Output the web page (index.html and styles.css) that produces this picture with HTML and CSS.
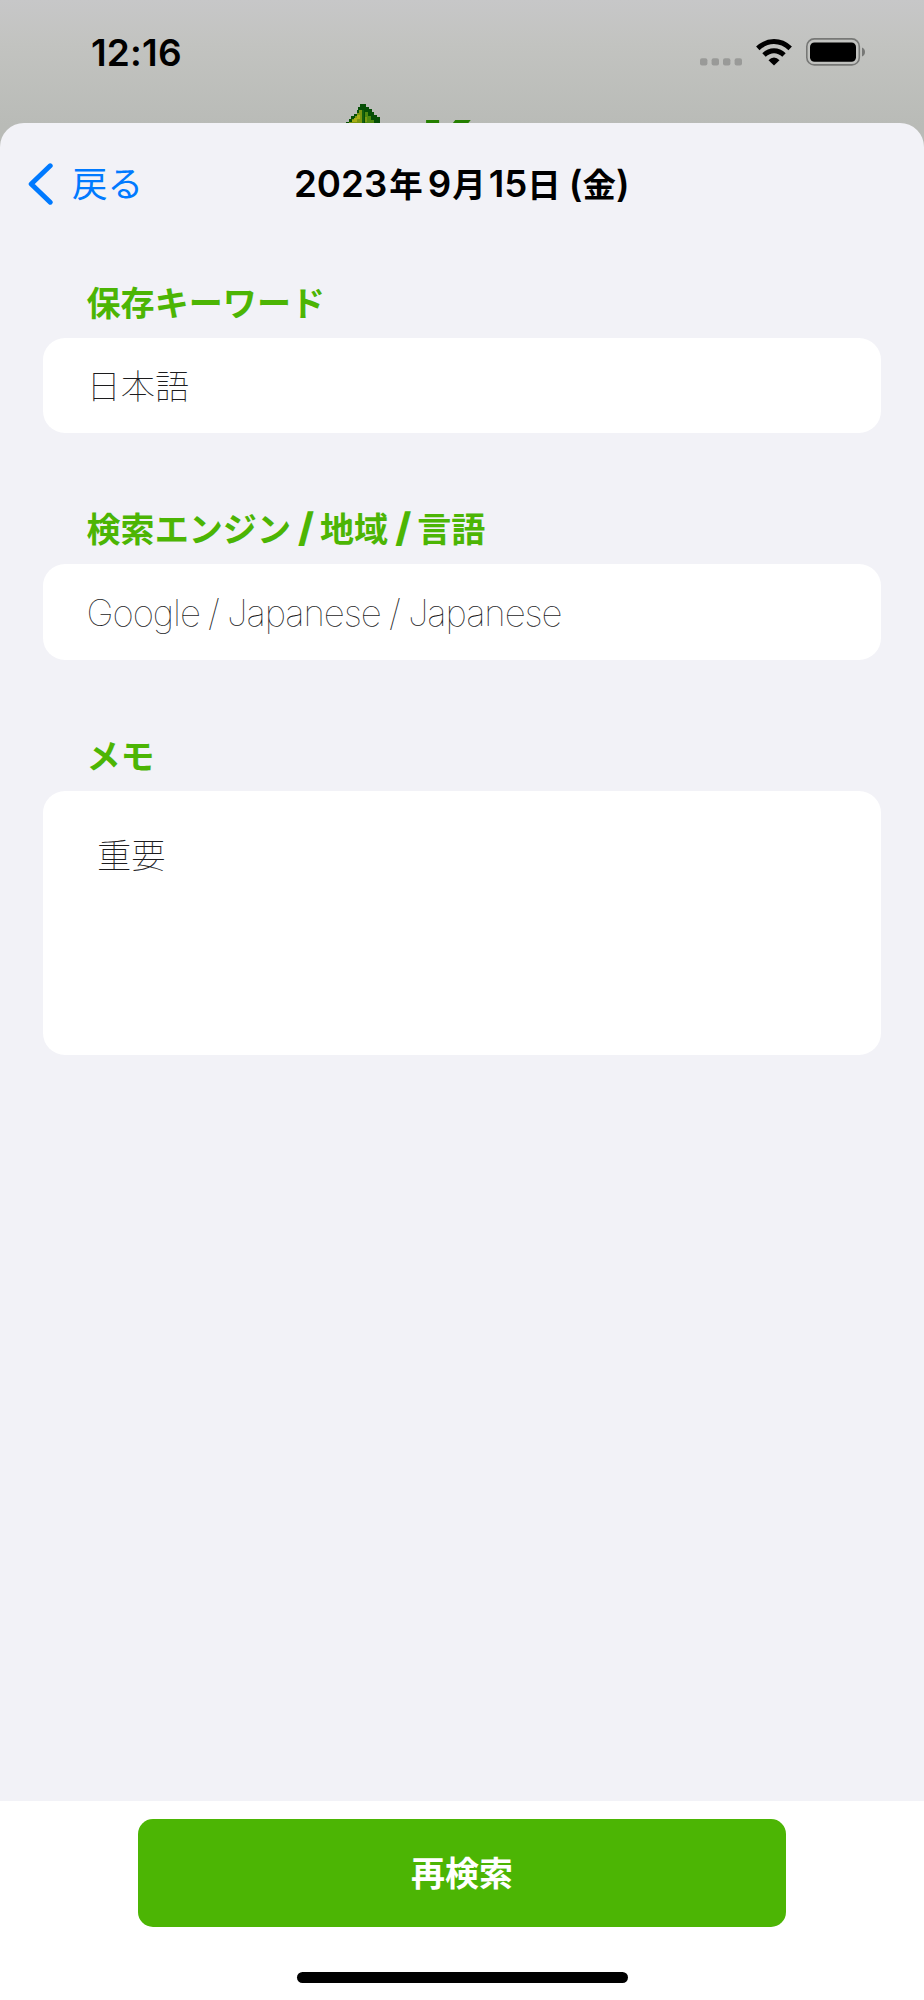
FILE: index.html
```html
<!DOCTYPE html>
<html lang="ja">
<head>
<meta charset="utf-8">
<title>2023年9月15日(金)</title>
<link rel="stylesheet" href="styles.css">
</head>
<body>
<div class="screen">
  <header class="backdrop">
    <div class="status">
      <span class="time">12:16</span>
      <div class="indicators">
        <svg class="dots" width="42" height="8" viewBox="0 0 42 8"><g fill="#999a98"><rect x="0" y="0.2" width="7.4" height="7.4" rx="2"/><rect x="11.6" y="0.2" width="7.4" height="7.4" rx="2"/><rect x="23" y="0.2" width="7.4" height="7.4" rx="2"/><rect x="34.6" y="0.2" width="7.4" height="7.4" rx="2"/></g></svg>
        <svg class="wifi" width="36" height="27" viewBox="0 0 36 27"><g fill="none" stroke="#000" stroke-width="5"><path d="M1.8 9.4Q9 2.6 18 2.6T34.2 9.4"/><path d="M8 16Q12.5 11.8 18 11.8T28 16"/></g><path d="M18 26.5l-5.5-5.3Q15 18.6 18 18.6t5.5 2.6z"/></svg>
        <svg class="battery" width="60" height="28" viewBox="0 0 60 28"><rect x="0.8" y="0.9" width="52.5" height="26" rx="7.5" fill="none" stroke="#777876" stroke-width="1.6"/><rect x="4" y="4.5" width="46" height="19.2" rx="4.5"/><path d="M56 9.6q3 1.3 3 4.4t-3 4.4z" fill="#777876"/></svg>
      </div>
    </div>
    <div class="brand">
      <svg class="leaf" width="34" height="20" viewBox="0 0 34 20" shape-rendering="crispEdges"><path fill="#064f06" d="M14 0h6v2.7h3v2.6h2.5V8h2.7v2.7H31v2.7h2.5V20H0v-2.5h2.5v-2.6h2.7v-2.7H8V9.6h2.6V6h1V3H14z"/><path fill="#7b9710" d="M13 6h2.5v14H3v-2h3v-3h3v-3h2v-3h2z"/><path fill="#a9ad16" d="M8 14h3v-3h3v4h-3v3H6v-2h2z"/><path fill="#16610f" d="M16 6h2v14h-2z"/><path fill="#4e8a10" d="M19 8h3v4h3v4h3v4h-9z"/><path fill="#7b9a12" d="M19 13h2v5h-2z"/></svg>
      <span class="name">K</span>
    </div>
  </header>
  <main class="sheet">
    <nav class="nav">
      <a class="back"><svg width="26" height="42" viewBox="0 0 26 42"><path d="M22.2 2.8L3.2 21l19 18.2" fill="none" stroke="#007aff" stroke-width="5" stroke-linecap="round" stroke-linejoin="round"/></svg><span>戻る</span></a>
      <h1 class="title">2023<span class="k year">年</span>9<span class="k month">月</span>15<span class="k day">日</span>(<span class="k">金</span>)</h1>
    </nav>
    <section class="field">
      <h2>保存キーワード</h2>
      <div class="card jp">日本語</div>
    </section>
    <section class="field">
      <h2>検索エンジン<span class="slash">/</span>地域<span class="slash">/</span>言語</h2>
      <div class="card latin">Google / Japanese / Japanese</div>
    </section>
    <section class="field">
      <h2>メモ</h2>
      <div class="card memo jp">重要</div>
    </section>
  </main>
  <footer class="footer">
    <button class="search">再検索</button>
    <div class="home"></div>
  </footer>
</div>
</body>
</html>
```

FILE: styles.css
```css
* { box-sizing: border-box; }
body { margin: 0; font-family: Inter, "Noto Sans CJK JP", sans-serif; color: #000; }
.screen { width: 924px; height: 2000px; display: flex; flex-direction: column; overflow: hidden; background: #fff; }
.backdrop { height: 160px; flex: none; background: linear-gradient(#c7c7c8 0, #c2c3c0 45px, #b9bbb7 125px); overflow: hidden; }
.status { height: 104px; display: flex; justify-content: space-between; padding: 0 58px 0 91px; }
.time { font-size: 37px; font-weight: 600; line-height: 44px; margin-top: 31px; letter-spacing: 0.2px; }
.indicators { display: flex; align-items: flex-start; }
.dots { margin-top: 58px; }
.wifi { margin: 39px 14px 0; }
.battery { margin-top: 38px; }
.brand { display: flex; height: 56px; padding-left: 346px; }
.leaf { flex: none; }
.name { margin-left: 43px; font-size: 66px; line-height: 80px; font-weight: 900; color: #257f00; }
.sheet { flex: 1; margin-top: -37px; background: #f2f2f7; border-radius: 24px 24px 0 0; padding: 0 43px; }
.nav { position: relative; height: 148.5px; margin: 0 -43px; padding: 38px 0 0 28px; }
.back { display: flex; align-items: center; gap: 18px; height: 46px; width: 130px; color: #007aff; font: 400 35.5px/42px "Noto Sans CJK JP", sans-serif; white-space: nowrap; }
.back span { padding-bottom: 5px; }
.title { position: absolute; left: 294px; top: 38px; margin: 0; font-size: 36.7px; line-height: 46px; font-weight: 600; white-space: nowrap; }
.k { font-family: "Noto Sans CJK JP", sans-serif; font-size: 33.5px; line-height: 1; }
.year { margin: 0 5px 0 2px; }
.month { margin: 0 3px 0 1px; }
.day { margin-right: 8px; }
.field { margin-bottom: 65px; }
h2 { margin: 0; height: 66px; padding: 6px 0 0 43.5px; font: 700 34.1px/46px "Noto Sans CJK JP", sans-serif; color: #4cb504; }
.slash { font-family: Inter, sans-serif; font-size: 40px; line-height: 1; font-weight: 800; margin: 0 6px 0 7px; }
.card { height: 95.5px; border-radius: 22px; background: #fff; padding: 25px 43.5px; line-height: 48px; color: #1c1c1e; }
.jp { font-family: "Noto Sans CJK JP", sans-serif; font-weight: 100; font-size: 34.3px; padding-top: 22px; }
.latin { font-size: 36.7px; font-weight: 100; letter-spacing: -1.08px; word-spacing: -1px; }
.memo { height: 264px; padding: 38px 54px; }
.footer { height: 199px; flex: none; display: flex; flex-direction: column; align-items: center; padding-top: 17.5px; }
.search { width: 648px; height: 108.5px; border: 0; border-radius: 15px; background: #4cb504; color: #fff; font: 700 34px/46px "Noto Sans CJK JP", sans-serif; padding-bottom: 3px; }
.home { width: 331px; height: 11px; border-radius: 6px; background: #000; margin-top: 45px; }
```
